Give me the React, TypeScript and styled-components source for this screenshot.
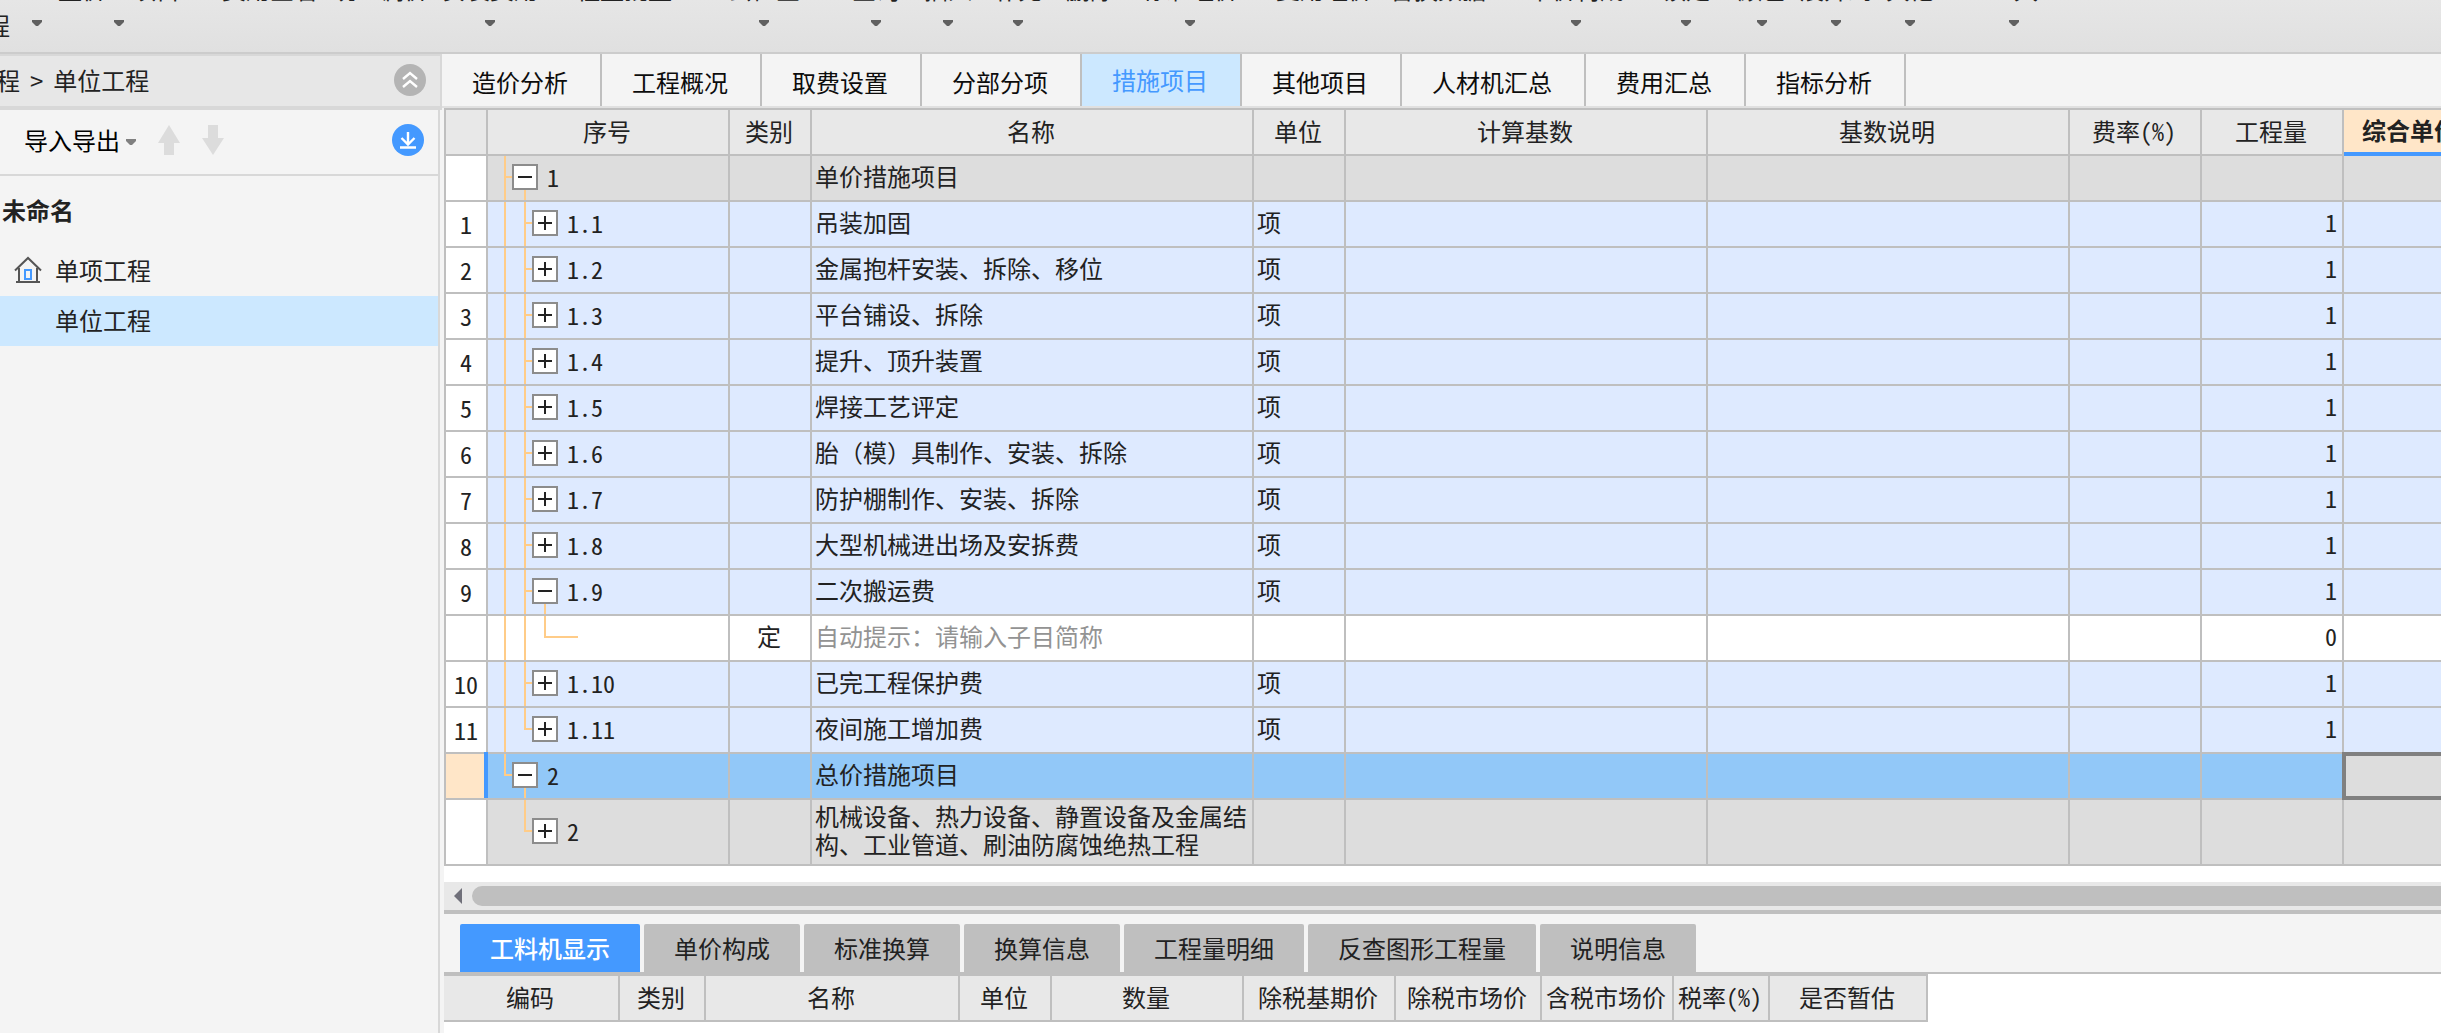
import React from "react";
import styled, { createGlobalStyle } from "styled-components";

const LINE = "#bfbfbf";
const BLUE = "#4499ff";
const PALE_BLUE = "#cce8ff";
const PEACH = "#ffe6c8";

const GlobalStyle = createGlobalStyle`
  *, *::before, *::after { box-sizing: border-box; }
  body {
    margin: 0;
    background: #ffffff;
    color: #222222;
    font-family: "Noto Sans CJK SC", sans-serif;
    font-size: 24px;
    line-height: 28px;
  }
  button {
    font: inherit;
    color: inherit;
    border: 0;
    padding: 0;
    margin: 0;
    background: none;
  }
  #root { min-height: 100vh; display: flex; }
`;

const Page = styled.div`
  flex: 1;
  min-width: 0;
  display: flex;
  flex-direction: column;
  min-height: 100vh;
  overflow: hidden;
`;

/* ---------- ribbon ---------- */

const Ribbon = styled.header`
  display: flex;
  height: 54px;
  overflow: hidden;
  background: linear-gradient(#e6e6e6, #e0e0e0);
  border-bottom: 2px solid #cccccc;
`;

const RibbonButton = styled.button<{ $gap: number }>`
  flex: none;
  display: flex;
  flex-direction: column;
  align-items: center;
  height: 52px;
  min-width: 10px;
  margin-left: ${(p) => p.$gap}px;
  white-space: nowrap;
`;

const RibbonLabel = styled.span`
  height: 24px;
  margin-top: -23px;
  line-height: 24px;
`;

const WideRibbonButton = styled.button`
  flex: none;
  display: flex;
  gap: 22px;
  height: 52px;
  margin-left: -14px;
  line-height: 50px;
`;

const Caret = styled.span`
  width: 10px;
  height: 6px;
  margin-top: 19px;
  background: #606060;
  clip-path: polygon(0 0, 100% 0, 100% 34%, 60% 100%, 40% 100%, 0 34%);
`;

const LineCaret = styled(Caret)`
  margin-top: 20px;
`;

type RibbonItem = { label: string; gap: number; menu?: boolean };

const ribbonItems: RibbonItem[] = [
  { label: "量价", gap: 16 },
  { label: "", gap: 8, menu: true },
  { label: "项目", gap: 8 },
  { label: "费用查看", gap: 42 },
  { label: "统一调价", gap: 14 },
  { label: "安装费用", gap: 14, menu: true },
  { label: "工程量批量", gap: 14 },
  { label: "云检查", gap: 56, menu: true },
  { label: "查询", gap: 52, menu: true },
  { label: "插入", gap: 24, menu: true },
  { label: "补充", gap: 22, menu: true },
  { label: "删除", gap: 24 },
  { label: "标准组价", gap: 28, menu: true },
  { label: "复用组价", gap: 38 },
  { label: "替换数据", gap: 18 },
  { label: "单价构成", gap: 42, menu: true },
  { label: "锁定", gap: 38, menu: true },
  { label: "颜色", gap: 28, menu: true },
  { label: "展开到", gap: 14, menu: true },
  { label: "其他", gap: 14, menu: true },
  { label: "工具", gap: 56, menu: true },
];

/* ---------- sidebar ---------- */

const Workspace = styled.div`
  flex: 1;
  display: flex;
  background: #f4f4f4;
`;

const Sidebar = styled.aside`
  flex: none;
  width: 442px;
  display: flex;
  flex-direction: column;
`;

const Breadcrumb = styled.nav`
  display: flex;
  align-items: center;
  justify-content: space-between;
  height: 56px;
  padding: 0 14px 2px 0;
  overflow: hidden;
  background: #e7e7e7;
  border: solid #d8d8d8;
  border-width: 2px 2px 4px 0;
  white-space: nowrap;
`;

const Trail = styled.div`
  display: flex;
  gap: 10px;
  margin-left: -4px;
  a { color: inherit; text-decoration: none; }
`;

const SidebarBody = styled.div`
  flex: 1;
  margin-right: 2px;
  border-right: 2px solid #d8d8d8;
`;

const SidebarTools = styled.div`
  display: flex;
  align-items: center;
  height: 66px;
  padding: 0 14px 4px 24px;
  border-bottom: 2px solid #d8d8d8;
`;

const ImportButton = styled.button`
  display: flex;
  align-items: center;
  gap: 6px;
  margin-right: 22px;
  color: #000000;
`;

const SmallCaret = styled(Caret)`
  margin-top: 4px;
  background: #808080;
`;

const IconButton = styled.button<{ $push?: boolean }>`
  display: flex;
  margin-left: ${(p) => (p.$push ? "auto" : "0")};
  margin-right: ${(p) => (p.$push ? "0" : "22px")};
  svg { display: block; }
`;

const ProjectName = styled.h2`
  margin: 0;
  padding: 0 2px 2px 2px;
  font-size: 24px;
  line-height: 68px;
  font-weight: 700;
`;

const ProjectList = styled.ul`
  list-style: none;
  margin: 0;
  padding: 0;
`;

const ProjectLink = styled.a<{ $selected?: boolean }>`
  display: flex;
  align-items: center;
  gap: 13px;
  height: 50px;
  padding: 0 0 2px 14px;
  color: inherit;
  text-decoration: none;
  background: ${(p) => (p.$selected ? PALE_BLUE : "transparent")};
`;

const IconSlot = styled.span`
  width: 28px;
  height: 28px;
  svg { display: block; }
`;

/* ---------- main area ---------- */

const Main = styled.main`
  flex: 1;
  min-width: 0;
  display: flex;
  flex-direction: column;
`;

const TopTabs = styled.div`
  display: flex;
  height: 54px;
  border-bottom: 2px solid #e0e0e0;
`;

const TopTab = styled.button<{ $selected?: boolean }>`
  padding: ${(p) => (p.$selected ? "0 32px 0 30px" : "4px 32px 0 30px")};
  border-right: 2px solid ${LINE};
  color: ${(p) => (p.$selected ? BLUE : "#0c0c0c")};
  background: ${(p) => (p.$selected ? PALE_BLUE : "transparent")};
  white-space: nowrap;
`;

const Panel = styled.div`
  flex: 1;
  min-width: 0;
  margin-left: 2px;
  display: flex;
  flex-direction: column;
  background: #ffffff;
`;

const GridFrame = styled.div`
  overflow: hidden;
  border: solid ${LINE};
  border-width: 2px 0 0 2px;
`;

const Table = styled.table<{ $width: number }>`
  width: ${(p) => p.$width}px;
  table-layout: fixed;
  border-collapse: separate;
  border-spacing: 0;
  font-feature-settings: "hwid" 1;
`;

const HeadCell = styled.th<{ $active?: boolean }>`
  height: 46px;
  padding: 0 2px 2px 0;
  border: solid ${LINE};
  border-width: 0 2px 2px 0;
  border-bottom: ${(p) => (p.$active ? `4px solid ${BLUE}` : `2px solid ${LINE}`)};
  background: ${(p) => (p.$active ? PEACH : "#e8e8e8")};
  font-weight: ${(p) => (p.$active ? 700 : 400)};
  white-space: nowrap;
`;

type Tone = "gray" | "blue" | "white" | "selected";
const toneColor: Record<Tone, string> = {
  gray: "#dddddd",
  blue: "#deeaff",
  white: "#ffffff",
  selected: "#92c8f8",
};

const Row = styled.tr<{ $tone: Tone; $tall?: boolean }>`
  height: ${(p) => (p.$tall ? 66 : 46)}px;
  background: ${(p) => toneColor[p.$tone]};
`;

const Cell = styled.td<{ $align?: string }>`
  position: relative;
  padding: 0 5px 4px 3px;
  border: solid ${LINE};
  border-width: 0 2px 2px 0;
  text-align: ${(p) => p.$align ?? "left"};
`;

const NameCell = styled(Cell)<{ $muted?: boolean }>`
  font-feature-settings: normal;
  color: ${(p) => (p.$muted ? "#939393" : "inherit")};
`;

const NumberCell = styled.th<{ $selected?: boolean }>`
  position: relative;
  padding: 0;
  border: solid ${LINE};
  border-width: 0 2px 2px 0;
  background: ${(p) => (p.$selected ? PEACH : "#ffffff")};
  font-weight: 400;
  &::after {
    content: "";
    display: ${(p) => (p.$selected ? "block" : "none")};
    position: absolute;
    top: -2px;
    right: -2px;
    bottom: 0;
    width: 4px;
    background: ${BLUE};
  }
`;

const FocusCell = styled(Cell)`
  background: #dddddd;
  &::after {
    content: "";
    position: absolute;
    inset: -2px;
    border: 4px solid #808080;
  }
`;

const TreeCell = styled(Cell)`
  padding: 0 0 2px 0;
`;

const TreeContent = styled.div<{ $level: number }>`
  position: relative;
  display: flex;
  align-items: center;
  gap: 9px;
  height: 26px;
  padding-left: ${(p) => 4 + p.$level * 20}px;
`;

const Toggle = styled.button`
  width: 26px;
  height: 26px;
  border: 2px solid #8c8c8c;
  background: #ffffff;
  svg { display: block; }
`;

const Branch = styled.span<{ $x: number; $part: "full" | "top" | "bottom" }>`
  position: absolute;
  left: ${(p) => p.$x}px;
  top: ${(p) => (p.$part === "bottom" ? "50%" : "0")};
  bottom: ${(p) => (p.$part === "top" ? "50%" : "0")};
  width: 2px;
  background: #ffcc88;
`;

const Twig = styled.span<{ $x: number; $long?: boolean }>`
  position: absolute;
  left: ${(p) => p.$x}px;
  top: calc(50% - 2px);
  width: ${(p) => (p.$long ? 34 : 8)}px;
  height: 2px;
  background: #ffcc88;
`;

const ScrollBar = styled.div`
  display: flex;
  align-items: center;
  gap: 10px;
  height: 32px;
  margin-top: 16px;
  padding-left: 10px;
  background: #e8e8e8;
  border-bottom: 4px solid ${LINE};
`;

const ScrollArrow = styled.button`
  width: 8px;
  height: 16px;
  background: #70707a;
  clip-path: polygon(100% 0, 0 50%, 100% 100%);
`;

const ScrollThumb = styled.div`
  flex: 1;
  height: 20px;
  border-radius: 10px 0 0 10px;
  background: ${LINE};
`;

const BottomTabs = styled.div`
  display: flex;
  gap: 4px;
  height: 60px;
  padding: 10px 16px 0 16px;
  background: #f4f4f4;
  border-bottom: 2px solid ${LINE};
`;

const BottomTab = styled.button<{ $selected?: boolean }>`
  padding: 0 30px;
  border-radius: 2px 2px 0 0;
  color: ${(p) => (p.$selected ? "#ffffff" : "#222222")};
  background: ${(p) => (p.$selected ? BLUE : LINE)};
  font-weight: ${(p) => (p.$selected ? 500 : 400)};
  white-space: nowrap;
`;

const DetailFrame = styled.div`
  overflow: hidden;
  table { border-top: 2px solid ${LINE}; }
`;

/* ---------- data ---------- */

const topTabs = ["造价分析", "工程概况", "取费设置", "分部分项", "措施项目", "其他项目", "人材机汇总", "费用汇总", "指标分析"];
const bottomTabs = ["工料机显示", "单价构成", "标准换算", "换算信息", "工程量明细", "反查图形工程量", "说明信息"];

const columns: [string, number][] = [
  ["", 42],
  ["序号", 242],
  ["类别", 82],
  ["名称", 442],
  ["单位", 92],
  ["计算基数", 362],
  ["基数说明", 362],
  ["费率(%)", 132],
  ["工程量", 142],
  ["综合单价", 136],
];

const detailColumns: [string, number][] = [
  ["编码", 176],
  ["类别", 86],
  ["名称", 254],
  ["单位", 92],
  ["数量", 192],
  ["除税基期价", 152],
  ["除税市场价", 146],
  ["含税市场价", 132],
  ["税率(%)", 96],
  ["是否暂估", 158],
];

type Item = {
  no?: string;
  code?: string;
  level: number;
  open?: boolean;
  kind?: string;
  name: string;
  unit?: string;
  qty?: string;
  tone: Tone;
  tall?: boolean;
  branches: [number, "full" | "top" | "bottom"][];
};

const measure = (no: number, name: string, extra: Partial<Item> = {}): Item => ({
  no: String(no),
  code: `1.${no}`,
  level: 2,
  name,
  unit: "项",
  qty: "1",
  tone: "blue",
  branches: [[16, "full"], [36, "full"]],
  ...extra,
});

const items: Item[] = [
  { code: "1", level: 1, open: true, name: "单价措施项目", tone: "gray", branches: [[16, "full"], [36, "bottom"]] },
  measure(1, "吊装加固"),
  measure(2, "金属抱杆安装、拆除、移位"),
  measure(3, "平台铺设、拆除"),
  measure(4, "提升、顶升装置"),
  measure(5, "焊接工艺评定"),
  measure(6, "胎（模）具制作、安装、拆除"),
  measure(7, "防护棚制作、安装、拆除"),
  measure(8, "大型机械进出场及安拆费"),
  measure(9, "二次搬运费", { open: true, branches: [[16, "full"], [36, "full"], [56, "bottom"]] }),
  { level: 3, kind: "定", name: "自动提示：请输入子目简称", qty: "0", tone: "white", branches: [[16, "full"], [36, "full"], [56, "top"]] },
  measure(10, "已完工程保护费"),
  measure(11, "夜间施工增加费", { branches: [[16, "full"], [36, "top"]] }),
  { code: "2", level: 1, open: true, name: "总价措施项目", tone: "selected", branches: [[16, "top"], [36, "bottom"]] },
  { code: "2", level: 2, name: "机械设备、热力设备、静置设备及金属结构、工业管道、刷油防腐蚀绝热工程", tone: "gray", tall: true, branches: [[36, "top"]] },
];

const total = (cols: [string, number][]) => cols.reduce((sum, c) => sum + c[1], 0);

/* ---------- icons ---------- */

const CollapseIcon = () => (
  <svg width="32" height="32" viewBox="0 0 32 32">
    <circle cx="16" cy="16" r="16" fill="#b4b4b4" />
    <path d="M9 15l7-6 7 6M9 23l7-6 7 6" fill="none" stroke="#ffffff" strokeWidth="2.4" />
  </svg>
);

const DownloadIcon = () => (
  <svg width="32" height="32" viewBox="0 0 32 32">
    <circle cx="16" cy="16" r="16" fill={BLUE} />
    <path d="M16 8v12M9.5 14l6.500 6.500 6.500-6.500M8 23.500h16" fill="none" stroke="#ffffff" strokeWidth="2.4" />
  </svg>
);

const UpIcon = () => (
  <svg width="22" height="30" viewBox="0 0 22 30">
    <path d="M11 0l11 18h-6v12H6V18H0z" fill="#dcdcdc" />
  </svg>
);

const DownIcon = () => (
  <svg width="22" height="30" viewBox="0 0 22 30">
    <path d="M11 30L0 13h6V0h10v13h6z" fill="#dcdcdc" />
  </svg>
);

const HomeIcon = () => (
  <svg width="28" height="28" viewBox="0 0 28 28" fill="none">
    <path d="M1 14.5L14 2l13 12.5M5 12v13.5M23 12v13.5M2 26h24" stroke="#555555" strokeWidth="2" />
    <path d="M11 14h6v9h-6z" stroke={BLUE} strokeWidth="2" />
  </svg>
);

const ToggleIcon = ({ open }: { open?: boolean }) => (
  <svg width="22" height="22" viewBox="0 0 22 22" shapeRendering="crispEdges">
    <path d={open ? "M4 11h14" : "M4 11h14M11 4v14"} stroke="#222222" strokeWidth="2" />
  </svg>
);

/* ---------- app ---------- */

const ItemRow = ({ item }: { item: Item }) => {
  const selected = item.tone === "selected";
  return (
    <Row $tone={item.tone} $tall={item.tall}>
      <NumberCell scope="row" $selected={selected}>{item.no}</NumberCell>
      <TreeCell>
        {item.branches.map(([x, part]) => (
          <Branch key={x} $x={x} $part={part} />
        ))}
        <Twig $x={item.level * 20 - 4} $long={!item.code} />
        {item.code && (
          <TreeContent $level={item.level}>
            <Toggle type="button" aria-label={item.open ? "收起" : "展开"}>
              <ToggleIcon open={item.open} />
            </Toggle>
            {item.code}
          </TreeContent>
        )}
      </TreeCell>
      <Cell $align="center">{item.kind}</Cell>
      <NameCell $muted={item.tone === "white"}>{item.name}</NameCell>
      <Cell>{item.unit}</Cell>
      <Cell />
      <Cell />
      <Cell />
      <Cell $align="right">{item.qty}</Cell>
      {selected ? <FocusCell /> : <Cell />}
    </Row>
  );
};

export default function App() {
  return (
    <Page>
      <GlobalStyle />
      <Ribbon>
        <WideRibbonButton type="button">
          程<LineCaret />
        </WideRibbonButton>
        {ribbonItems.map((item, i) => (
          <RibbonButton key={i} type="button" $gap={item.gap}>
            <RibbonLabel>{item.label}</RibbonLabel>
            {item.menu && <Caret />}
          </RibbonButton>
        ))}
      </Ribbon>
      <Workspace>
        <Sidebar>
          <Breadcrumb>
            <Trail>
              <a href="#project">程</a>
              <span>&gt;</span>
              <a href="#unit">单位工程</a>
            </Trail>
            <IconButton type="button" $push aria-label="收起">
              <CollapseIcon />
            </IconButton>
          </Breadcrumb>
          <SidebarBody>
            <SidebarTools>
              <ImportButton type="button">
                导入导出
                <SmallCaret />
              </ImportButton>
              <IconButton type="button" aria-label="上移"><UpIcon /></IconButton>
              <IconButton type="button" aria-label="下移"><DownIcon /></IconButton>
              <IconButton type="button" $push aria-label="下载"><DownloadIcon /></IconButton>
            </SidebarTools>
            <ProjectName>未命名</ProjectName>
            <ProjectList>
              <li>
                <ProjectLink href="#single">
                  <IconSlot><HomeIcon /></IconSlot>
                  单项工程
                </ProjectLink>
              </li>
              <li>
                <ProjectLink href="#unit" $selected>
                  <IconSlot />
                  单位工程
                </ProjectLink>
              </li>
            </ProjectList>
          </SidebarBody>
        </Sidebar>
        <Main>
          <TopTabs role="tablist">
            {topTabs.map((tab) => (
              <TopTab key={tab} type="button" role="tab" $selected={tab === "措施项目"}>
                {tab}
              </TopTab>
            ))}
          </TopTabs>
          <Panel>
            <GridFrame>
              <Table $width={total(columns)}>
                <colgroup>
                  {columns.map(([name, width]) => <col key={name} width={width} />)}
                </colgroup>
                <thead>
                  <tr>
                    {columns.map(([name]) => (
                      <HeadCell key={name} scope="col" $active={name === "综合单价"}>{name}</HeadCell>
                    ))}
                  </tr>
                </thead>
                <tbody>
                  {items.map((item, i) => <ItemRow key={i} item={item} />)}
                </tbody>
              </Table>
            </GridFrame>
            <ScrollBar>
              <ScrollArrow type="button" aria-label="向左滚动" />
              <ScrollThumb />
            </ScrollBar>
            <BottomTabs role="tablist">
              {bottomTabs.map((tab) => (
                <BottomTab key={tab} type="button" role="tab" $selected={tab === "工料机显示"}>
                  {tab}
                </BottomTab>
              ))}
            </BottomTabs>
            <DetailFrame>
              <Table $width={total(detailColumns)}>
                <colgroup>
                  {detailColumns.map(([name, width]) => <col key={name} width={width} />)}
                </colgroup>
                <thead>
                  <tr>
                    {detailColumns.map(([name]) => (
                      <HeadCell key={name} scope="col">{name}</HeadCell>
                    ))}
                  </tr>
                </thead>
              </Table>
            </DetailFrame>
          </Panel>
        </Main>
      </Workspace>
    </Page>
  );
}
